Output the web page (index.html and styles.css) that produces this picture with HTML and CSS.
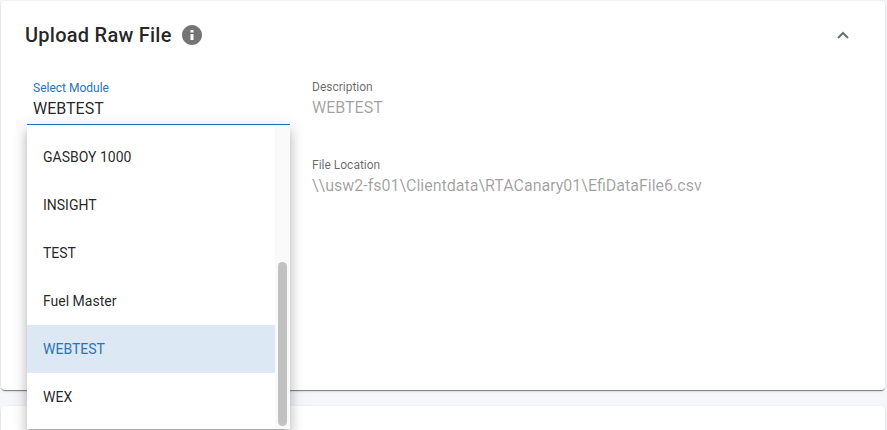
FILE: index.html
```html
<!DOCTYPE html>
<html lang="en">
<head>
    <meta charset="UTF-8">
    <meta name="viewport" content="width=device-width, initial-scale=1.0">
    <title>Upload Raw File</title>

    <link rel="stylesheet" href="styles.css">
</head>
<body>

<main class="page">
    <section class="card">
        <header class="card-header">
            <h1>Upload Raw File</h1>
            <button class="icon-button" type="button" aria-label="Info">
                <svg width="24" height="24" viewBox="0 0 24 24" fill="#757575"><path d="M12 2C6.48 2 2 6.48 2 12s4.48 10 10 10 10-4.48 10-10S17.52 2 12 2zm1.500 15h-3v-6h3v6zm0-7.500h-3V7h3v2.500z"/></svg>
            </button>
            <button class="icon-button collapse" type="button" aria-label="Collapse" aria-expanded="true">
                <svg width="12" height="12" viewBox="0 0 12 12" fill="none" stroke="#66717c" stroke-width="2"><path d="M1 9l5-5 5 5"/></svg>
            </button>
        </header>

        <div class="card-body">
            <div class="field module">
                <label for="module">Select Module</label>
                <select id="module">
                    <option>GASBOY 1000</option>
                    <option>INSIGHT</option>
                    <option>TEST</option>
                    <option>Fuel Master</option>
                    <option selected>WEBTEST</option>
                    <option>WEX</option>
                </select>

                <!-- open option list -->
                <div class="panel">
                    <div class="options" role="listbox" aria-label="Select Module">
                        <button class="option" type="button" role="option">GASBOY 1000</button>
                        <button class="option" type="button" role="option">INSIGHT</button>
                        <button class="option" type="button" role="option">TEST</button>
                        <button class="option" type="button" role="option">Fuel Master</button>
                        <button class="option selected" type="button" role="option" aria-selected="true">WEBTEST</button>
                        <button class="option" type="button" role="option">WEX</button>
                    </div>
                    <div class="scrollbar"><div class="thumb"></div></div>
                </div>
            </div>

            <div class="details">
                <div class="field">
                    <label for="description">Description</label>
                    <input type="text" id="description" value="WEBTEST" disabled>
                </div>
                <div class="field">
                    <label for="location">File Location</label>
                    <input type="text" id="location" value="\\usw2-fs01\Clientdata\RTACanary01\EfiDataFile6.csv" disabled>
                </div>
            </div>
        </div>
    </section>

    <section class="card next"></section>
</main>

</body>
</html>
```

FILE: styles.css
```css
* {
    margin: 0;
    padding: 0;
    box-sizing: border-box;
}

body {
    font-family: Roboto, "Liberation Sans", sans-serif;
    background-color: #f4f6f9;
    color: rgba(0, 0, 0, 0.87);
}

button,
input,
select {
    font-family: inherit;
    color: inherit;
    background: none;
    border: none;
}

.page {
    display: flex;
    flex-direction: column;
    gap: 16px;
    min-height: 100vh;
    padding: 1px 2px 0 1px;
}

.card {
    background-color: white;
    border-radius: 4px;
    box-shadow: 0 2px 1px -1px rgba(0, 0, 0, 0.3), 0 1px 1px rgba(0, 0, 0, 0.2), 0 1px 3px rgba(0, 0, 0, 0.12);
}

.card.next {
    flex: 1;
    border-radius: 4px 4px 0 0;
}

.card-header {
    display: flex;
    align-items: center;
    gap: 8px;
    height: 68px;
    padding: 0 36px 0 24px;
}

h1 {
    font-size: 20px;
    font-weight: 500;
    line-height: 32px;
    letter-spacing: 0.0125em;
}

.icon-button {
    display: flex;
    cursor: pointer;
}

.collapse {
    margin-left: auto;
}

.card-body {
    display: flex;
    gap: 16px;
    min-height: 321px;
    padding: 8px 24px 24px 26px;
}

.field {
    display: flex;
    flex-direction: column;
}

.field label {
    font-size: 12px;
    line-height: 18px;
    color: rgba(0, 0, 0, 0.6);
}

.module {
    position: relative;
    flex: 0 0 263px;
    align-self: flex-start;
    padding-top: 2px;
    border-bottom: 1px solid #2a73b9;
}

.field.module label {
    padding-left: 6px;
    color: #2a73b9;
}

.field select,
.field input {
    height: 24px;
    font-size: 16px;
    line-height: 24px;
}

.field select {
    height: 27px;
    padding: 0 6px 4px;
    appearance: none;
    outline: none;
}

.details {
    display: flex;
    flex: 1;
    flex-direction: column;
    gap: 36px;
    padding: 1px 0 0 6px;
}

.field input {
    width: 100%;
    color: rgba(0, 0, 0, 0.38);
}

.panel {
    position: absolute;
    top: 100%;
    left: 0;
    z-index: 1;
    display: flex;
    width: 100%;
    margin-top: 1px;
    background-color: white;
    box-shadow: 0 5px 5px -3px rgba(0, 0, 0, 0.2), 0 8px 10px 1px rgba(0, 0, 0, 0.14), 0 3px 14px 2px rgba(0, 0, 0, 0.12);
}

.options {
    flex: 1;
    padding: 8px 0;
}

.option {
    display: block;
    width: 100%;
    height: 48px;
    padding: 0 16px;
    font-size: 14px;
    text-align: left;
    cursor: pointer;
}

.option.selected {
    background-color: #dce8f4;
    color: #2a73b9;
}

.scrollbar {
    display: flex;
    align-items: flex-end;
    width: 15px;
    padding: 3px;
    background-color: #fafafa;
}

.thumb {
    width: 9px;
    height: 55%;
    border-radius: 5px;
    background-color: #c1c1c1;
}
```
